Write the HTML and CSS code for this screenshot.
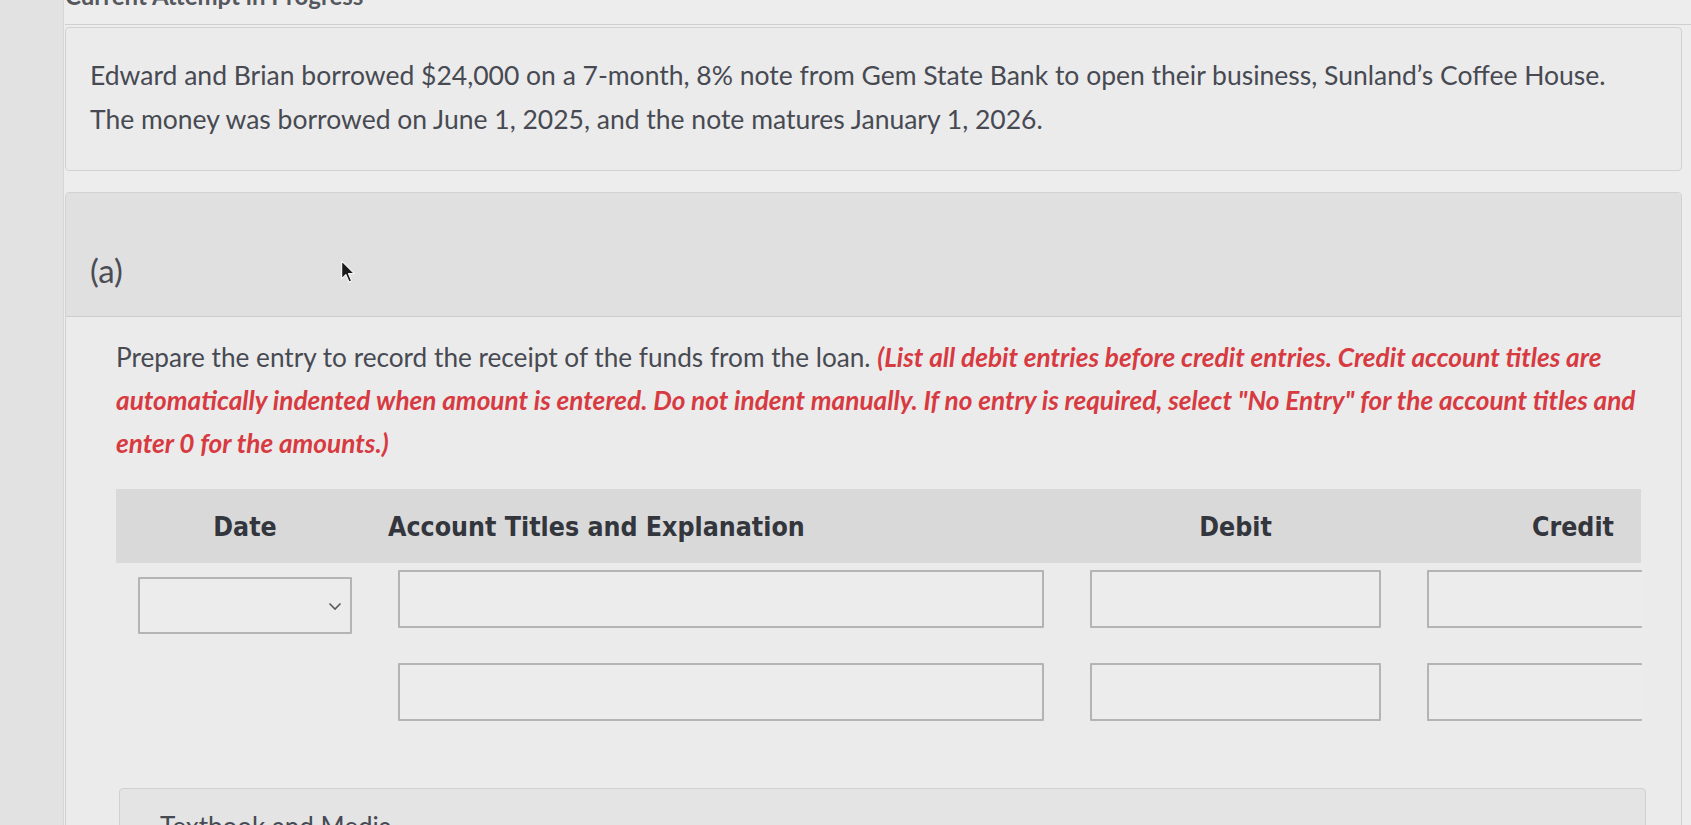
FILE: index.html
```html
<!DOCTYPE html>
<html lang="en">
<head>
<meta charset="utf-8">
<title>Current Attempt in Progress</title>
<link rel="stylesheet" href="styles.css">
</head>
<body>
<div class="page">
  <div class="attempt">Current Attempt in Progress</div>
  <div class="sep"></div>

  <div class="card problem">
    <p>Edward and Brian borrowed $24,000 on a 7-month, 8% note from Gem State Bank to open their business, Sunland’s Coffee House.<br>The money was borrowed on June 1, 2025, and the note matures January 1, 2026.</p>
  </div>

  <div class="card part">
    <div class="part-head">
      <span class="part-label">(a)</span>
      <svg class="cursor" width="17" height="26" viewBox="0 0 16 24" aria-hidden="true">
        <path d="M1.5 1.5 L1.5 18.5 L5.5 14.5 L8.5 21.5 L11 20.5 L8 13.5 L13.5 13.5 Z" fill="#1b1b1b" stroke="#f4f4f4" stroke-width="1.2" stroke-linejoin="round"/>
      </svg>
    </div>
    <div class="part-body">
      <p class="instr">Prepare the entry to record the receipt of the funds from the loan. <em class="warn">(List all debit entries before credit entries. Credit account titles are<br>automatically indented when amount is entered. Do not indent manually. If no entry is required, select "No Entry" for the account titles and<br>enter 0 for the amounts.)</em></p>

      <div class="journal">
        <div class="jhead">
          <div class="h-date">Date</div>
          <div class="h-acct">Account Titles and Explanation</div>
          <div class="h-debit">Debit</div>
          <div class="h-credit">Credit</div>
        </div>
        <div class="jrow">
          <div class="field select">
            <svg class="chev" width="14" height="9" viewBox="0 0 14 9" aria-hidden="true"><polyline points="1.5,1.5 7,7 12.5,1.5" fill="none" stroke="#5a5a5a" stroke-width="1.6"/></svg>
          </div>
          <div class="field"></div>
          <div class="field"></div>
          <div class="field open"></div>
        </div>
        <div class="jrow">
          <div class="blank"></div>
          <div class="field"></div>
          <div class="field"></div>
          <div class="field open"></div>
        </div>
      </div>

      <div class="media-card">Textbook and Media</div>
    </div>
  </div>
</div>
</body>
</html>
```

FILE: styles.css
```css
* { box-sizing: border-box; }

html, body {
  margin: 0;
  padding: 0;
  height: 100%;
  overflow: hidden;
}

body {
  background: #e2e2e2;
  font-family: Lato, "Open Sans", "Liberation Sans", sans-serif;
  color: #474a52;
}

.page {
  margin-left: 63px;
  height: 100%;
  overflow: hidden;
  background: #ededed;
  border-left: 1px solid #d6d6d6;
  padding: 0 9px 0 1px;
}

.attempt {
  margin-top: -16px;
  height: 24px;
  line-height: 24px;
  font-size: 24px;
  font-weight: 700;
  color: #55585e;
}

.sep {
  margin-top: 16px;
  height: 1px;
  background: #cfcfcf;
  margin-right: -9px;
}

.card {
  border: 1px solid #d2d2d2;
  border-radius: 4px;
  background: #ebebeb;
}

.problem {
  margin-top: 2px;
  padding: 25px 24px 29px;
}

.problem p {
  margin: 0;
  font-size: 26.5px;
  line-height: 44px;
  color: #474a52;
}

.part {
  margin-top: 21px;
  overflow: hidden;
}

.part-head {
  position: relative;
  background: #e0e0e0;
  border-bottom: 1px solid #cdcdcd;
  height: 124px;
  padding: 57px 24px 0;
}

.part-label {
  font-size: 33px;
  line-height: 40px;
  color: #4a4d55;
}

.cursor {
  position: absolute;
  left: 274px;
  top: 66px;
}

.part-body {
  background: #ebebeb;
  padding: 19px 41px 0 50px;
}

.instr {
  margin: 0;
  font-size: 26.2px;
  line-height: 43px;
  color: #474a52;
}

.warn {
  color: #d73a41;
  font-weight: 700;
  font-style: italic;
}

.journal {
  margin-top: 24px;
  width: 1525px;
}

.jhead {
  display: grid;
  grid-template-columns: 214px 646px 291px 213px;
  column-gap: 46px;
  align-items: center;
  height: 74px;
  padding-left: 22px;
  background: #d9d9d9;
  font-family: "DejaVu Sans Condensed", "DejaVu Sans", sans-serif;
  font-stretch: condensed;
  font-weight: 700;
  font-size: 26.5px;
  color: #33363d;
}

.h-date { text-align: center; }
.h-acct { margin-left: -10px; }
.h-debit { text-align: center; }
.h-credit { text-align: right; padding-right: 26px; }

.jrow {
  display: grid;
  grid-template-columns: 214px 646px 291px 215px;
  column-gap: 46px;
  padding-left: 22px;
  margin-top: 7px;
}

.jrow + .jrow { margin-top: 29px; }

.field {
  height: 58px;
  border: 2px solid #b4b4b4;
  border-radius: 1px;
  background: #ececec;
}

.field.open { border-right: none; }

.select {
  position: relative;
  margin-top: 7px;
  height: 57px;
}

.chev {
  position: absolute;
  right: 8px;
  top: 23px;
}

.media-card {
  margin-top: 67px;
  margin-left: 3px;
  width: 1527px;
  height: 80px;
  border: 1px solid #d0d0d0;
  border-radius: 4px;
  background: #e4e4e4;
  padding: 22px 40px 0;
  font-size: 26px;
  line-height: 30px;
  color: #474a52;
}
```
